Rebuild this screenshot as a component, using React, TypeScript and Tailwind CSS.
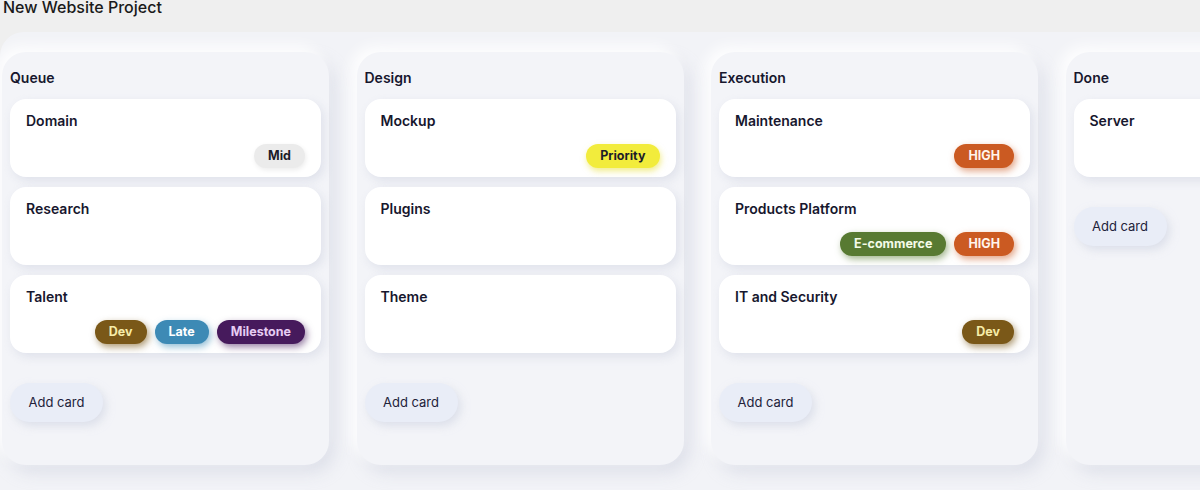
import React from "react";

type Tag = { label: string; className: string };
type Card = { title: string; tags: Tag[] };
type Column = { name: string; cards: Card[] };

const tag = {
  mid: "bg-[#ebebeb] text-[#1c1c28] shadow-[1px_2px_5px_rgba(0,0,0,0.08)]",
  priority: "bg-[#f2ec3c] text-[#1c1c28] shadow-[1px_3px_6px_rgba(230,220,40,0.55)]",
  high: "bg-[#cb5a22] text-[#fff4ec] shadow-[2px_3px_7px_rgba(203,90,34,0.55)]",
  ecom: "bg-[#587a32] text-[#f4fbe8] shadow-[2px_3px_7px_rgba(88,122,50,0.55)]",
  dev: "bg-[#7a5818] text-[#f6eca8] shadow-[2px_3px_7px_rgba(122,88,24,0.6)]",
  late: "bg-[#3d8ab5] text-white shadow-[2px_3px_7px_rgba(61,138,181,0.55)]",
  milestone: "bg-[#461a5c] text-[#e6ccf3] shadow-[2px_3px_7px_rgba(70,26,92,0.55)]",
};

const columns: Column[] = [
  {
    name: "Queue",
    cards: [
      { title: "Domain", tags: [{ label: "Mid", className: tag.mid }] },
      { title: "Research", tags: [] },
      {
        title: "Talent",
        tags: [
          { label: "Dev", className: tag.dev },
          { label: "Late", className: tag.late },
          { label: "Milestone", className: tag.milestone },
        ],
      },
    ],
  },
  {
    name: "Design",
    cards: [
      { title: "Mockup", tags: [{ label: "Priority", className: tag.priority }] },
      { title: "Plugins", tags: [] },
      { title: "Theme", tags: [] },
    ],
  },
  {
    name: "Execution",
    cards: [
      { title: "Maintenance", tags: [{ label: "HIGH", className: tag.high }] },
      {
        title: "Products Platform",
        tags: [
          { label: "E-commerce", className: tag.ecom },
          { label: "HIGH", className: tag.high },
        ],
      },
      { title: "IT and Security", tags: [{ label: "Dev", className: tag.dev }] },
    ],
  },
  {
    name: "Done",
    cards: [{ title: "Server", tags: [] }],
  },
];

function BoardCard({ card }: { card: Card }) {
  return (
    <div className="h-[78px] shrink-0 rounded-[16px] bg-white px-4 pt-[12px] shadow-[3px_4px_10px_rgba(200,204,220,0.45)]">
      <p className="text-[14px] leading-5 font-semibold text-[#17172e]">{card.title}</p>
      {card.tags.length > 0 && (
        <div className="mt-[13px] flex justify-end gap-2">
          {card.tags.map((t, i) => (
            <span
              key={i}
              className={`h-6 rounded-full px-[14px] text-[12.5px] leading-6 font-bold ${t.className}`}
            >
              {t.label}
            </span>
          ))}
        </div>
      )}
    </div>
  );
}

export default function App() {
  return (
    <div className="h-[490px] w-[1200px] overflow-hidden bg-[#efefef] font-['Inter','Liberation_Sans',sans-serif]">
      <div className="h-8">
        <h1 className="pl-[3px] text-[16px] leading-[15px] font-medium text-[#1a1a1a]">
          New Website Project
        </h1>
      </div>
      <div className="flex h-[458px] gap-[27.5px] overflow-hidden rounded-tl-[24px] bg-[#f2f3f7] pt-5 pl-[2px]">
        {columns.map((col) => (
          <div
            key={col.name}
            className="flex h-[413px] w-[327px] shrink-0 flex-col rounded-[24px] bg-[#f3f4f8] px-2 shadow-[-6px_-6px_14px_rgba(255,255,255,0.9),6px_8px_16px_rgba(214,217,228,0.7)]"
          >
            <h2 className="pt-[16px] text-[14px] leading-5 font-semibold text-[#17172e]">{col.name}</h2>
            <div className="mt-[11px] flex flex-col gap-[10px]">
              {col.cards.map((c) => (
                <BoardCard key={c.title} card={c} />
              ))}
            </div>
            <div className="mt-[30px]">
              <button className="h-[39px] w-[93px] rounded-full bg-[#e9edf7] text-[13px] text-[#22223a] shadow-[3px_4px_9px_rgba(205,210,225,0.6)]">
                Add card
              </button>
            </div>
          </div>
        ))}
      </div>
    </div>
  );
}
